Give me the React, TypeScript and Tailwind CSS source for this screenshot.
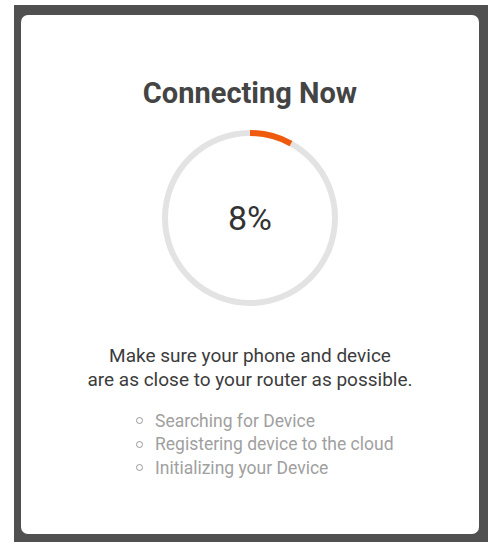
import React from "react";

const PROGRESS = 8;
const STEPS = ["Searching for Device", "Registering device to the cloud", "Initializing your Device"];

function ProgressRing({ value }: { value: number }) {
    const r = 85;
    const c = 2 * Math.PI * r;
    return (
        <div className="relative w-[178px] h-[178px]">
            <svg width="178" height="178" viewBox="0 0 178 178" className="-rotate-90">
                <circle cx="89" cy="89" r={r} fill="none" stroke="#e3e3e3" strokeWidth="6" />
                <circle
                    cx="89"
                    cy="89"
                    r={r}
                    fill="none"
                    stroke="#f05a0c"
                    strokeWidth="6"
                    strokeDasharray={`${(c * value) / 100} ${c}`}
                />
            </svg>
            <div className="absolute inset-0 flex items-center justify-center text-[34px] text-[#333]">
                {value}%
            </div>
        </div>
    );
}

export default function App() {
    return (
        <div className="w-[497px] h-[550px] bg-white pt-[5px] pl-[14px] font-['Roboto',sans-serif]">
            <div className="w-[474px] h-[537px] bg-[#505050] pt-[10px] pl-[7px] pr-[9px] pb-[8px]">
                <div className="h-full bg-white rounded-[7px] flex flex-col items-center">
                    <h1 className="mt-[61px] text-[29px] leading-[34px] font-bold text-[#444]">Connecting Now</h1>
                    <div className="mt-[19px]">
                        <ProgressRing value={PROGRESS} />
                    </div>

                    <p className="mt-[37px] text-center text-[19px] leading-[24px] text-[#3c3c3c]">
                        Make sure your phone and device
                        <br />
                        are as close to your router as possible.
                    </p>

                    <ul className="mt-[17px] self-start ml-[115px] flex flex-col">
                        {STEPS.map(s => (
                            <li key={s} className="flex items-center h-[23.5px] text-[17.5px] text-[#a0a0a0]">
                                <span className="w-[7px] h-[7px] rounded-full border-[1.5px] border-[#999] mr-[12px]" />
                                {s}
                            </li>
                        ))}
                    </ul>
                </div>
            </div>
        </div>
    );
}
